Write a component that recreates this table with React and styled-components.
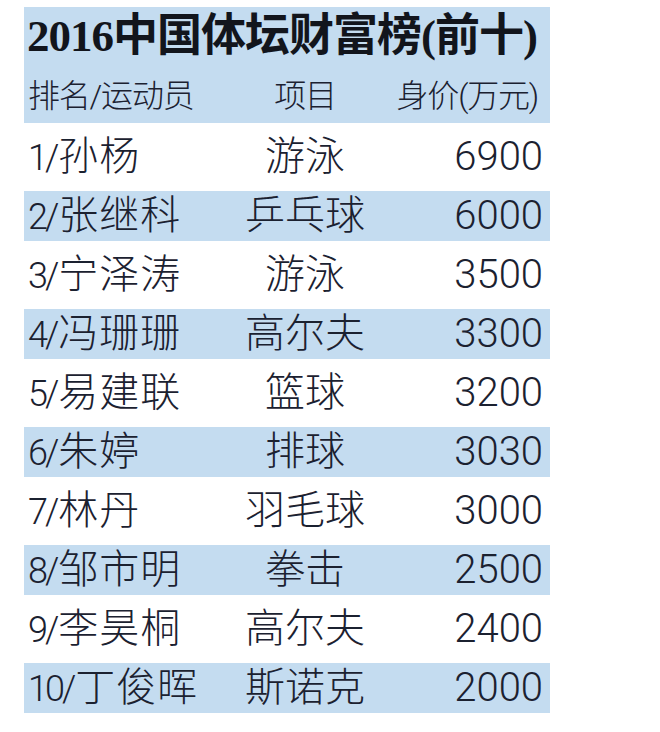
import React from "react";
import styled, { createGlobalStyle } from "styled-components";

const GlobalStyle = createGlobalStyle`
  html, body { margin: 0; padding: 0; background: #ffffff; }
  body { font-family: Roboto, "Noto Sans CJK SC", sans-serif; }
`;

const BLUE = "#c4dcf0";
const INK = "#1b2130";

const Page = styled.div`
  width: 660px;
  height: 732px;
  padding: 7px 0 0 24px;
  box-sizing: border-box;
  background: #fff;
`;

const Table = styled.div`
  width: 526px;
  display: flex;
  flex-direction: column;
  gap: 9px;
`;

const Header = styled.div`
  background: ${BLUE};
  display: flex;
  flex-direction: column;
`;

const Title = styled.div`
  height: 62px;
  box-sizing: border-box;
  padding: 0 0 4px 3px;
  display: flex;
  align-items: center;
  font-family: "Liberation Serif", "Noto Sans CJK SC", serif;
  font-weight: 700;
  font-size: 45px;
  line-height: 1;
  letter-spacing: -1px;
  color: #12151c;
  white-space: nowrap;
`;

const Grid = styled.div`
  display: grid;
  grid-template-columns: 200px 154px 1fr;
  align-items: center;
  padding: 0 7px 0 4px;
  box-sizing: border-box;
  color: ${INK};
  white-space: nowrap;
  line-height: 1;
`;

const SubHead = styled(Grid)`
  height: 54px;
  font-family: Roboto, "Noto Sans CJK SC", sans-serif;
  font-weight: 300;
  font-size: 32px;
  letter-spacing: -1.2px;
`;

const Row = styled(Grid)`
  height: 50px;
  background: ${(p) => (p.$shaded ? BLUE : "transparent")};
  font-family: Roboto, "Noto Sans CJK SC", sans-serif;
  font-weight: 300;
  font-size: 40px;
`;

const Name = styled.span`
  letter-spacing: ${(p) => (p.$head ? "-1.2px" : "1px")};
`;

const Rank = styled.span`
  font-size: 36px;
  letter-spacing: -3px;
  margin-right: 2px;
`;

const Sport = styled.span`
  text-align: center;
`;

const Price = styled.span`
  text-align: right;
  padding-right: ${(p) => (p.$head ? "5px" : "0")};
`;

const data = [
  ["1", "孙杨", "游泳", "6900"],
  ["2", "张继科", "乒乓球", "6000"],
  ["3", "宁泽涛", "游泳", "3500"],
  ["4", "冯珊珊", "高尔夫", "3300"],
  ["5", "易建联", "篮球", "3200"],
  ["6", "朱婷", "排球", "3030"],
  ["7", "林丹", "羽毛球", "3000"],
  ["8", "邹市明", "拳击", "2500"],
  ["9", "李昊桐", "高尔夫", "2400"],
  ["10", "丁俊晖", "斯诺克", "2000"],
];

export default function App() {
  return (
    <>
      <GlobalStyle />
      <Page>
        <Table>
          <Header>
            <Title>2016中国体坛财富榜(前十)</Title>
            <SubHead>
              <Name $head>排名/运动员</Name>
              <Sport>项目</Sport>
              <Price $head>身价(万元)</Price>
            </SubHead>
          </Header>
          {data.map(([r, n, s, p], i) => (
            <Row key={n} $shaded={i % 2 === 1}>
              <Name>
                <Rank>{r}/</Rank>
                {n}
              </Name>
              <Sport>{s}</Sport>
              <Price>{p}</Price>
            </Row>
          ))}
        </Table>
      </Page>
    </>
  );
}
